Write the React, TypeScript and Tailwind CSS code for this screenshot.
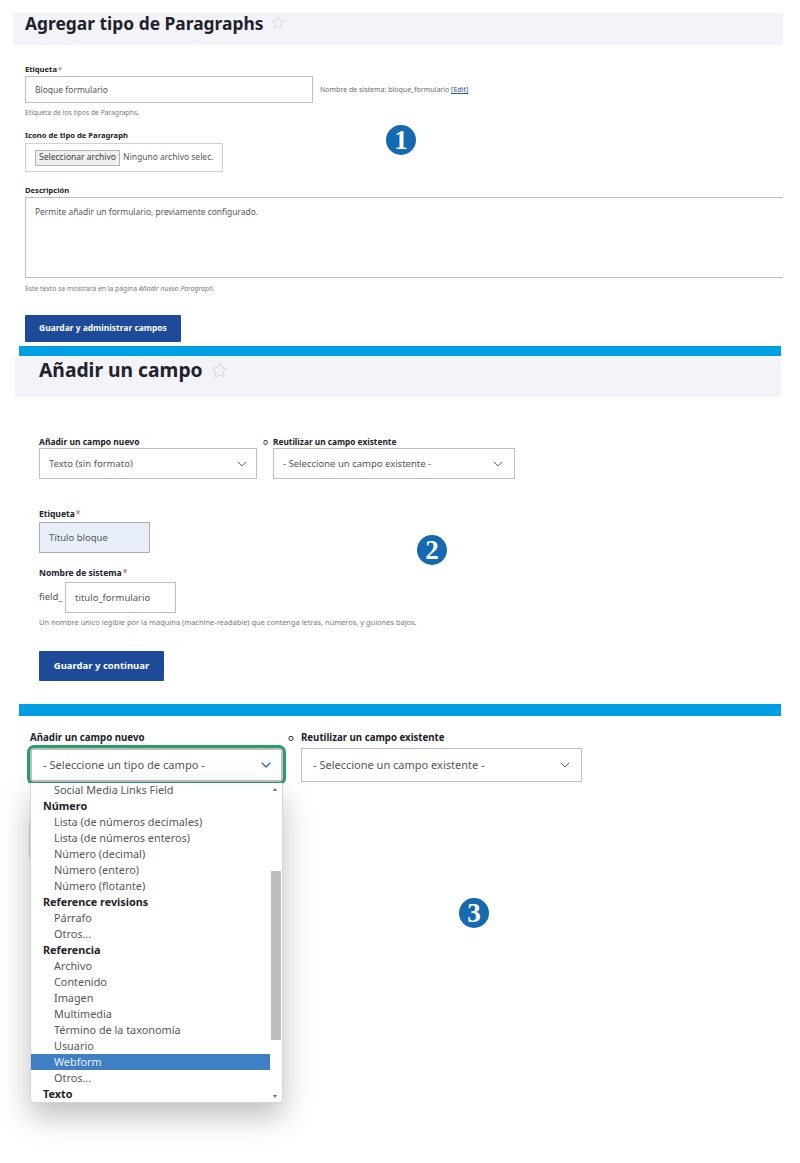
import React from 'react';
import { ChevronDown, Star } from 'lucide-react';

const font = '[font-family:"Noto_Sans",sans-serif]';

const Badge: React.FC<{ n: string; className: string }> = ({ n, className }) => (
  <div
    className={`absolute flex h-[30px] w-[30px] items-center justify-center rounded-full bg-[#1469b0] font-['Liberation_Serif',serif] text-[27px] leading-none font-bold text-white ${className}`}
  >
    {n}
  </div>
);

const Title: React.FC<{ text: string; className: string; star: number }> = ({ text, className, star }) => (
  <div className={`flex items-center font-bold text-[#22222a] ${className}`}>
    {text}
    <Star size={star} strokeWidth={1} className="ml-[8px] text-[#c3c5cf]" />
  </div>
);

const Label: React.FC<{ children: React.ReactNode; required?: boolean; className?: string }> = ({ children, required, className = '' }) => (
  <div className={`font-bold text-[#22222a] ${className}`}>
    {children}
    {required && <span className="ml-[1px] font-normal text-[#d0453f]">*</span>}
  </div>
);

const Select: React.FC<{ text: string; className: string; textClass: string; chevron?: string; stroke?: number }> = ({
  text,
  className,
  textClass,
  chevron = 'mr-[8px] text-[#55565b]',
  stroke = 1.4,
}) => (
  <div className={`flex items-center justify-between border border-[#bdbdc2] bg-white text-[#55565b] ${className}`}>
    <span className={textClass}>{text}</span>
    <ChevronDown size={16} strokeWidth={stroke} className={chevron} />
  </div>
);

const Option: React.FC<{ children: React.ReactNode; selected?: boolean }> = ({ children, selected }) => (
  <div className={`h-[16px] pl-[23px] text-[10.85px] leading-[16px] ${selected ? 'bg-[#3f7fc4] text-[#e8f0fa]' : 'text-[#55565b]'}`}>
    {children}
  </div>
);

const Group: React.FC<{ children: React.ReactNode }> = ({ children }) => (
  <div className="h-[16px] pl-[12px] text-[10.8px] leading-[16px] font-bold text-[#22222a]">{children}</div>
);

export default function App() {
  return (
    <div className={`relative h-[1163px] w-[800px] overflow-hidden bg-white ${font}`}>
      {/* Paso 1 */}
      <section className="pt-[13px]">
        <div className="ml-[13px] h-[32px] w-[770px] bg-[#f3f4f9] pl-[12px]">
          <Title text="Agregar tipo de Paragraphs" className="h-[20px] text-[17.4px] leading-[20px]" star={14} />
        </div>
        <div className="pl-[25px]">
          <Label required className="mt-[18px] h-[12px] text-[7.6px] leading-[12px]">Etiqueta</Label>
          <div className="mt-[1px] flex items-center">
            <div className="flex h-[27px] w-[288px] items-center border border-[#bdbdc2] pt-[1px] pl-[9px] text-[8.5px] text-[#55565b]">
              Bloque formulario
            </div>
            <span className="ml-[7px] pt-[1px] text-[7px] text-[#6b6c72]">
              Nombre de sistema: bloque_formulario <span className="text-[#2d4f9e] underline">[Edit]</span>
            </span>
          </div>
          <div className="mt-[5px] h-[10px] text-[6.75px] leading-[10px] text-[#77787e]">Etiqueta de los tipos de Paragraphs.</div>
          <Label className="mt-[11px] h-[12px] text-[7.65px] leading-[12px]">Icono de tipo de Paragraph</Label>
          <div className="mt-[2px] flex h-[29px] w-[198px] items-center border border-[#cfcfd4] pl-[9px] text-[8.5px] text-[#55565b]">
            <span className="flex h-[16px] w-[85px] items-center justify-center border border-[#b5b5b8] bg-[#efefef] text-[#3c3c42]">
              Seleccionar archivo
            </span>
            <span className="ml-[3px]">Ninguno archivo selec.</span>
          </div>
          <Label className="mt-[12px] h-[12px] text-[7.6px] leading-[12px]">Descripción</Label>
          <div className="mt-[1px] h-[81px] w-[758px] border border-r-0 border-[#bdbdc2] pt-[7px] pl-[9px] text-[8.45px] leading-[14px] text-[#55565b]">
            Permite añadir un formulario, previamente configurado.
          </div>
          <div className="mt-[6px] h-[10px] text-[6.8px] leading-[10px] text-[#77787e]">
            Este texto se mostrará en la página <em>Añadir nuevo Paragraph</em>.
          </div>
          <div className="mt-[21px] flex h-[27px] w-[156px] items-center justify-center rounded-[1px] bg-[#1d4a99] text-[8.45px] font-bold text-white">
            Guardar y administrar campos
          </div>
        </div>
      </section>

      <div className="mt-[4px] ml-[19px] h-[10px] w-[762px] bg-[#009fe3]" />

      {/* Paso 2 */}
      <section>
        <div className="ml-[15px] h-[41px] w-[766px] bg-[#f3f4f9] pt-[1px] pl-[24px]">
          <Title text="Añadir un campo" className="h-[26px] text-[19.3px] leading-[26px]" star={17} />
        </div>
        <div className="pl-[39px]">
          <div className="mt-[38px] flex">
            <div className="w-[218px]">
              <Label className="h-[13px] text-[8.5px] leading-[13px]">Añadir un campo nuevo</Label>
              <Select text="Texto (sin formato)" className="h-[31px] w-[218px] pt-[1px]" textClass="pl-[9px] text-[9.5px]" chevron="mr-[6px] text-[#55565b]" />
            </div>
            <div className="ml-[6px]">
              <Label className="h-[13px] text-[8.3px] leading-[13px]">
                <span className="inline-block w-[10px] font-normal">o</span>Reutilizar un campo existente
              </Label>
              <Select text="- Seleccione un campo existente -" className="ml-[10px] h-[31px] w-[242px] pt-[1px]" textClass="pl-[9px] text-[9.5px]" />
            </div>
          </div>
          <Label required className="mt-[28px] h-[14px] text-[8.5px] leading-[14px]">Etiqueta</Label>
          <div className="mt-[1px] flex h-[31px] w-[111px] items-center border border-[#a9aeb9] bg-[#e8eef8] pt-[2px] pl-[9px] text-[9.5px] text-[#55565b]">
            Título bloque
          </div>
          <Label required className="mt-[13px] h-[14px] text-[8.5px] leading-[14px]">Nombre de sistema</Label>
          <div className="mt-[2px] flex items-center text-[9.5px] text-[#55565b]">
            <span className="w-[26px]">field_</span>
            <div className="flex h-[31px] w-[111px] items-center border border-[#bdbdc2] pt-[1px] pl-[9px]">titulo_formulario</div>
          </div>
          <div className="mt-[3px] h-[12px] text-[7.45px] leading-[12px] text-[#77787e]">
            Un nombre único legible por la máquina (machine-readable) que contenga letras, números, y guiones bajos.
          </div>
          <div className="mt-[23px] flex h-[30px] w-[125px] items-center justify-center rounded-[1px] bg-[#1d4a99] text-[9.5px] font-bold text-white">
            Guardar y continuar
          </div>
        </div>
      </section>

      <div className="mt-[23px] ml-[19px] h-[12px] w-[762px] bg-[#009fe3]" />

      {/* Paso 3 */}
      <section className="relative pt-[15px]">
        <div className="flex pl-[30px]">
          <div className="w-[253px]">
            <Label className="h-[14px] text-[9.7px] leading-[14px]">Añadir un campo nuevo</Label>
            <div className="mt-[3px] rounded-[4px] outline-[3px] outline-[#2c9c6a]">
              <Select
                text="- Seleccione un tipo de campo -"
                className="h-[34px] w-[253px] rounded-[2px] border-2 border-[#2a2a30]"
                textClass="pl-[11px] text-[11.1px]"
                chevron="mr-[7px] text-[#2a6bb5]"
                stroke={2}
              />
            </div>
          </div>
          <div className="ml-[5px]">
            <Label className="h-[14px] text-[9.67px] leading-[14px]">
              <span className="inline-block w-[13px] font-normal">o</span>Reutilizar un campo existente
            </Label>
            <Select text="- Seleccione un campo existente -" className="mt-[3px] ml-[13px] h-[34px] w-[281px]" textClass="pl-[11px] text-[11px]" />
          </div>
        </div>
        {/* boton que queda detras del desplegable */}
        <div className="mt-[41px] ml-[29px] h-[34px] w-[125px] bg-[#c9d0ea]" />

        <div className="absolute top-[67px] left-[30px] flex h-[320px] w-[253px] overflow-hidden rounded-b-[5px] border-x border-b border-[#d5d5d8] bg-white shadow-[0_14px_30px_rgba(0,0,0,0.25)]">
          <div className="-mt-[1px] w-[239px]">
            <Option>Social Media Links Field</Option>
            <Group>Número</Group>
            <Option>Lista (de números decimales)</Option>
            <Option>Lista (de números enteros)</Option>
            <Option>Número (decimal)</Option>
            <Option>Número (entero)</Option>
            <Option>Número (flotante)</Option>
            <Group>Reference revisions</Group>
            <Option>Párrafo</Option>
            <Option>Otros...</Option>
            <Group>Referencia</Group>
            <Option>Archivo</Option>
            <Option>Contenido</Option>
            <Option>Imagen</Option>
            <Option>Multimedia</Option>
            <Option>Término de la taxonomía</Option>
            <Option>Usuario</Option>
            <Option selected>Webform</Option>
            <Option>Otros...</Option>
            <Group>Texto</Group>
          </div>
          {/* scrollbar */}
          <div className="relative w-[12px] bg-white">
            <div className="absolute top-[5px] left-[3px] h-0 w-0 border-x-[2.5px] border-b-[3px] border-x-transparent border-b-[#6b6b6b]" />
            <div className="absolute top-[88px] left-[1px] h-[169px] w-[10px] bg-[#bdbdbd]" />
            <div className="absolute bottom-[4px] left-[3px] h-0 w-0 border-x-[2.5px] border-t-[3px] border-x-transparent border-t-[#6b6b6b]" />
          </div>
        </div>
      </section>

      <Badge n="1" className="top-[125px] left-[386px]" />
      <Badge n="2" className="top-[535px] left-[417px]" />
      <Badge n="3" className="top-[898px] left-[459px]" />
    </div>
  );
}
